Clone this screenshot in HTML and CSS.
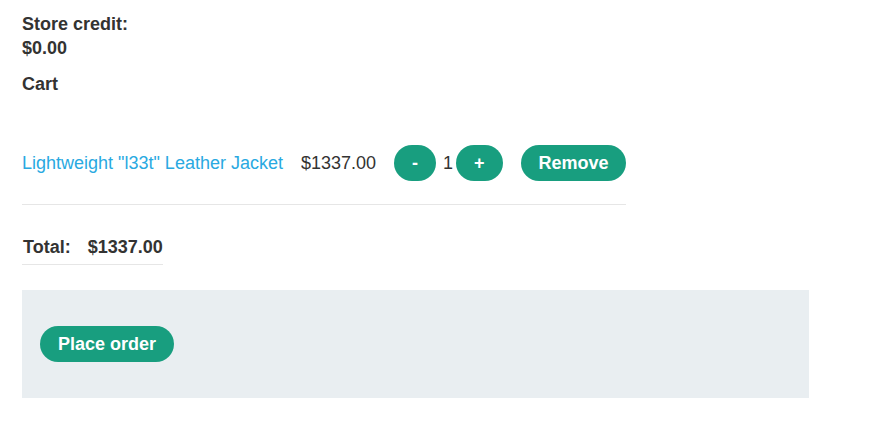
FILE: index.html
```
<!DOCTYPE html>
<html>
<head>
<meta charset="utf-8">
<link rel="stylesheet" href="styles.css">
</head>
<body>
<div class="page">
  <div class="credit">
    <div class="label">Store credit:</div>
    <div class="label">$0.00</div>
  </div>
  <div class="cart-title">Cart</div>
  <div class="cart-row">
    <a class="product" href="#">Lightweight "l33t" Leather Jacket</a>
    <span class="price">$1337.00</span>
    <div class="qty">
      <button class="btn btn-qty">-</button>
      <span class="qty-num">1</span>
      <button class="btn btn-qty">+</button>
    </div>
    <button class="btn btn-remove">Remove</button>
  </div>
  <div class="total-row">
    <span class="total-label">Total:</span>
    <span class="total-value">$1337.00</span>
  </div>
  <div class="order-box">
    <button class="btn btn-order">Place order</button>
  </div>
</div>
</body>
</html>
```
FILE: styles.css
```
* { box-sizing: border-box; }
body {
  margin: 0;
  font-family: "Liberation Sans", Arial, sans-serif;
  font-size: 18px;
  color: #333332;
  background: #fff;
}
.page {
  padding: 12px 0 0 22px;
}
.credit .label {
  font-weight: bold;
  line-height: 24px;
}
.cart-title {
  font-weight: bold;
  line-height: 24px;
  margin-top: 12px;
}
.cart-row {
  display: flex;
  align-items: center;
  gap: 18px;
  width: fit-content;
  height: 84px;
  margin-top: 25px;
  padding-top: 1px;
  border-bottom: 1px solid #e6e6e6;
}
.product {
  color: #29a9e1;
  text-decoration: none;
}
.qty {
  display: flex;
  align-items: center;
}
.qty-num {
  margin: 0 3px 0 7px;
}
.btn {
  font-family: "Liberation Sans", Arial, sans-serif;
  font-size: 18px;
  font-weight: bold;
  color: #fff;
  background: #189e7f;
  border: none;
  border-radius: 18px;
  height: 36px;
  padding: 0 18px;
  cursor: pointer;
}
.btn-remove { padding: 0 17px 0 18px; }
.total-row {
  display: flex;
  gap: 17px;
  width: fit-content;
  font-weight: bold;
  margin-top: 29px;
  padding: 1px 0 5px 1px;
  line-height: 24px;
  border-bottom: 1px solid #e6e6e6;
}
.order-box {
  width: 787px;
  height: 108px;
  margin-top: 25px;
  padding: 36px 18px 0;
  background: #e9eef1;
}
```
